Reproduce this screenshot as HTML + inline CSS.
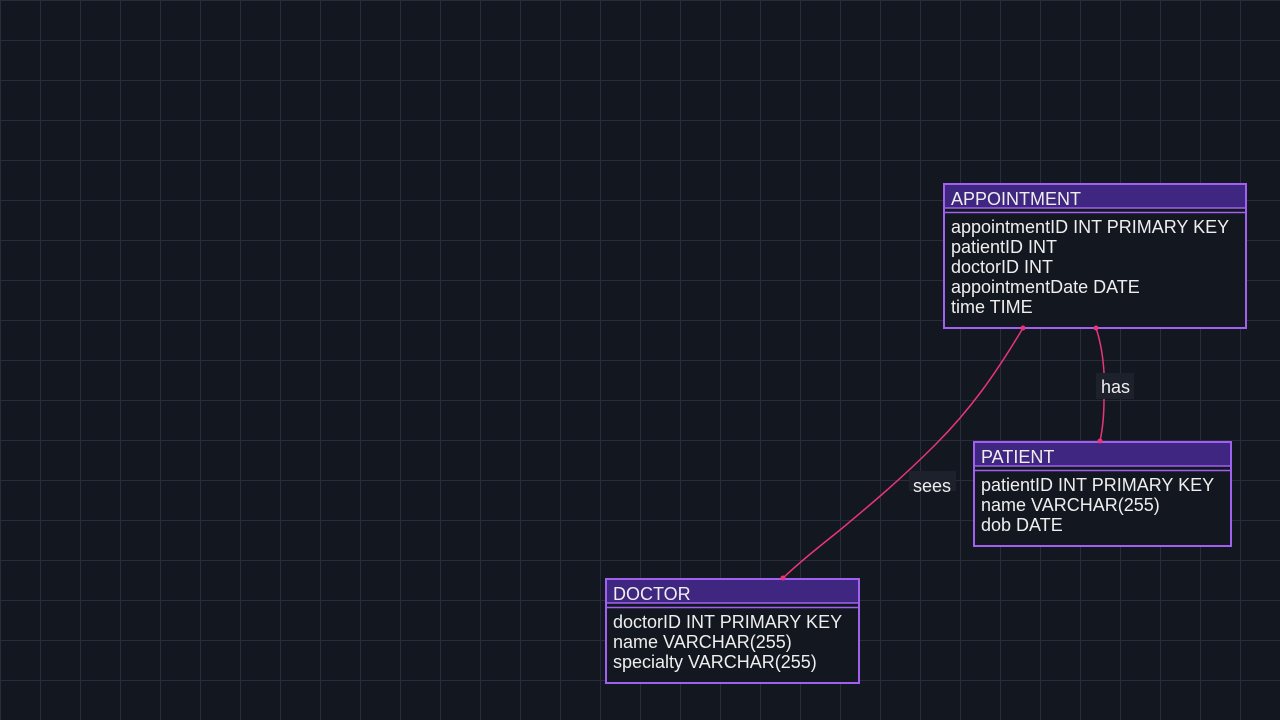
<!DOCTYPE html><html><head><style>body{margin:0;background:#131720}svg{display:block}text{font-family:"Liberation Sans",sans-serif;font-size:18px;fill:#eee}</style></head><body>
<svg width="1280" height="720" xmlns="http://www.w3.org/2000/svg">
<defs><pattern id="g" width="40" height="40" patternUnits="userSpaceOnUse"><path d="M0.5 0V40M0 0.5H40" stroke="#2a2c3e" stroke-width="1"/></pattern></defs>
<rect width="1280" height="720" fill="#131720"/><rect width="1280" height="720" fill="url(#g)"/>
<rect x="1096" y="373" width="38" height="26" fill="#1d212b"/><text x="1101" y="393">has</text>
<g>
<rect x="944" y="184" width="302" height="144" fill="#131720" stroke="#a060f0" stroke-width="2"/>
<rect x="945" y="185" width="300" height="23" fill="#3f2680"/>
<path d="M945 208H1245M945 212.5H1245" stroke="#a060f0" stroke-width="1.5"/>
<text x="951" y="205">APPOINTMENT</text>
<text x="951" y="233">appointmentID INT PRIMARY KEY</text>
<text x="951" y="253">patientID INT</text>
<text x="951" y="273">doctorID INT</text>
<text x="951" y="293">appointmentDate DATE</text>
<text x="951" y="313">time TIME</text>
</g>
<g>
<rect x="974" y="442" width="257" height="104" fill="#131720" stroke="#a060f0" stroke-width="2"/>
<rect x="975" y="443" width="255" height="23" fill="#3f2680"/>
<path d="M975 466H1230M975 470.5H1230" stroke="#a060f0" stroke-width="1.5"/>
<text x="981" y="463">PATIENT</text>
<text x="981" y="491">patientID INT PRIMARY KEY</text>
<text x="981" y="511">name VARCHAR(255)</text>
<text x="981" y="531">dob DATE</text>
</g>
<g>
<rect x="606" y="579" width="253" height="104" fill="#131720" stroke="#a060f0" stroke-width="2"/>
<rect x="607" y="580" width="251" height="23" fill="#3f2680"/>
<path d="M607 603H858M607 607.5H858" stroke="#a060f0" stroke-width="1.5"/>
<text x="613" y="600">DOCTOR</text>
<text x="613" y="628">doctorID INT PRIMARY KEY</text>
<text x="613" y="648">name VARCHAR(255)</text>
<text x="613" y="668">specialty VARCHAR(255)</text>
</g>
<rect x="909" y="471" width="47" height="20" fill="#1d212b"/><text x="913" y="492">sees</text>
<g stroke="#e8357a" stroke-width="1.5" fill="none">
<path d="M1023 328 C995 375 970 410 935 445 C900 480 870 505 840 530 C815 550 800 562 783 578"/>
<path d="M1096 328 C1100 340 1103 355 1104 373"/>
<path d="M1104 399 C1104 420 1102 432 1100 441"/>
</g>
<g fill="#e8357a"><circle cx="1023" cy="328" r="2.5"/><circle cx="783" cy="578" r="2.5"/><circle cx="1096" cy="328" r="2.5"/><circle cx="1100" cy="441" r="2.5"/></g>
</svg></body></html>
